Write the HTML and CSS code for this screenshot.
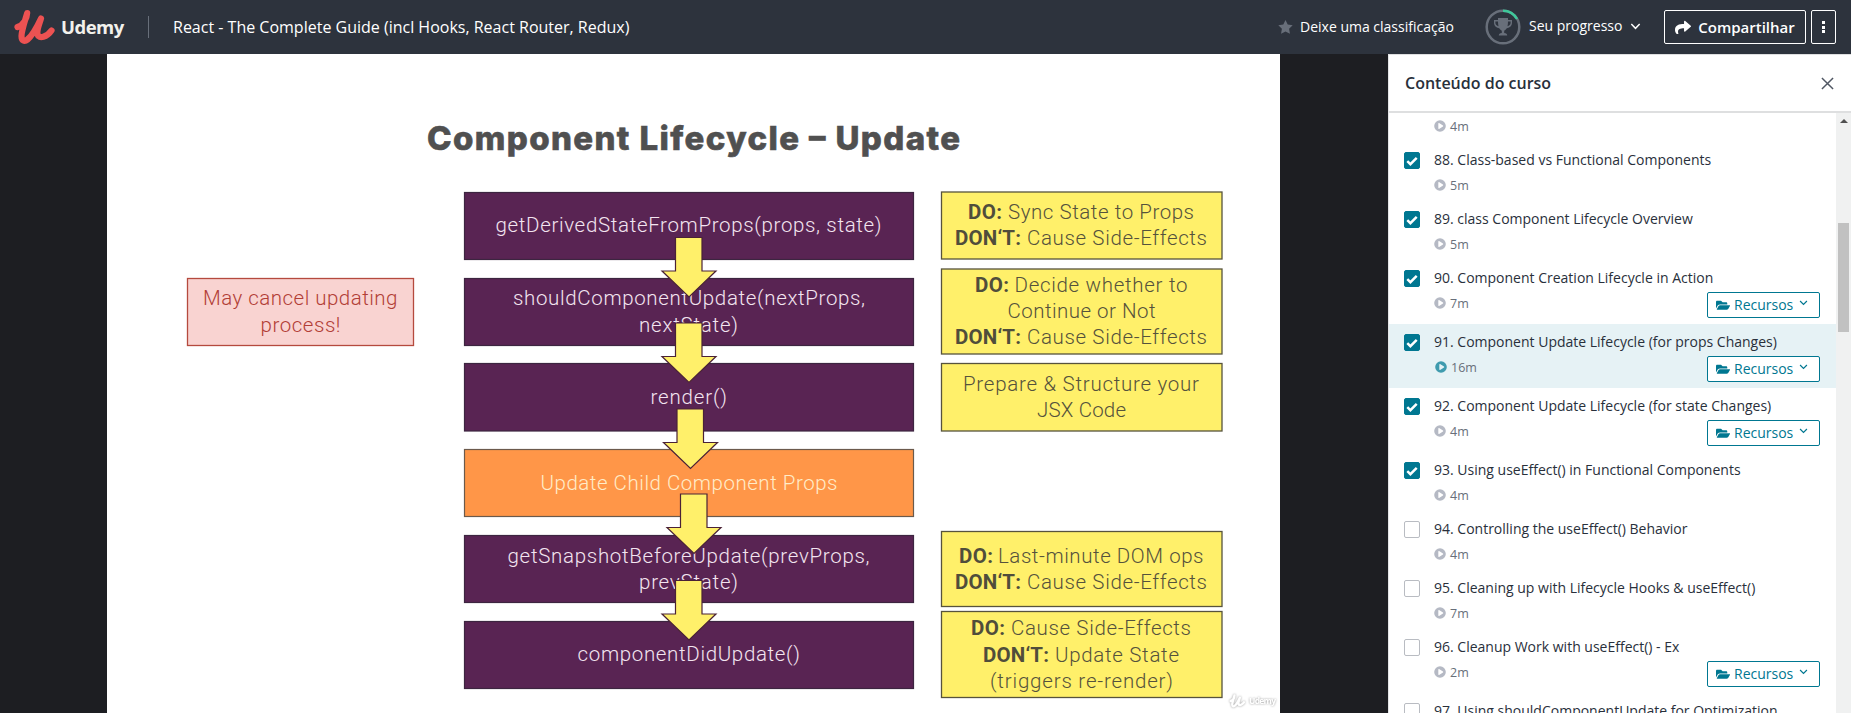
FILE: index.html
```html
<!DOCTYPE html>
<html lang="pt">
<head>
<meta charset="utf-8">
<title>React - The Complete Guide</title>
<link rel="stylesheet" href="styles.css">
</head>
<body>
<svg class="defs" width="0" height="0" aria-hidden="true">
  <symbol id="brand" viewBox="0 0 42 36"><path d="M3.500 18C9.500 16 13 9.500 13.200 4C11.500 10 7.500 22 7.500 27C7.500 32 10.500 33 13.500 30.500C18.500 26.500 23.500 17 27 9.500C25.500 15 22.500 21 23.500 25.500C25 30.500 33 28 37.500 21.500" fill="none" stroke="currentColor" stroke-width="6.200" stroke-linecap="round" stroke-linejoin="round"/></symbol>
  <symbol id="play" viewBox="0 0 512 512"><path fill="currentColor" fill-rule="evenodd" d="M256 8a248 248 0 1 0 0 496 248 248 0 0 0 0-496zM184 150v212c0 18 18 26 32 18l168-102c14-10 14-34 0-44L216 132c-14-8-32 0-32 18z"/></symbol>
  <symbol id="folder" viewBox="0 0 576 448"><path fill="currentColor" d="M573 260l-72 124c-12 20-40 32-62 32H45c-11 0-20-8-12-22l72-124c12-20 40-32 62-32h394c11 0 20 8 12 22zM167 206h297v-46c0-26-22-48-48-48H272l-64-64H48C22 48 0 70 0 96v272l77-132c18-18 56-30 90-30z"/></symbol>
  <symbol id="down" viewBox="0 0 10 8"><path d="M1.200 1.800L5 5.700L8.800 1.800" fill="none" stroke="currentColor" stroke-width="1.300"/></symbol>
  <symbol id="tick" viewBox="0 0 12 10"><path d="M1.300 5.200L4.400 8.200L10.700 1.900" fill="none" stroke="#fff" stroke-width="2.500"/></symbol>
  <symbol id="arrow" viewBox="-28 0 56 61" overflow="visible"><path d="M-13.500 .5H13V34H27L0 60L-27 34H-13.500Z"/></symbol>
</svg>

<header class="topbar">
  <svg class="brand-mark"><use href="#brand"/></svg>
  <span class="brand-name">Udemy</span>
  <span class="divider"></span>
  <h1 class="course">React - The Complete Guide (incl Hooks, React Router, Redux)</h1>
  <svg class="star" viewBox="0 0 24 23"><path fill="currentColor" d="M12 0l3.600 7.500 8.200 1.200-5.900 5.800 1.400 8.200L12 18.900l-7.300 3.800 1.400-8.200L.2 8.700l8.200-1.200z"/></svg>
  <span class="rate">Deixe uma classificação</span>
  <svg class="progress" viewBox="0 0 36 36">
    <circle cx="18" cy="18" r="16.300" fill="none" stroke="#686f7a" stroke-width="2.500"/>
    <path d="M18 1.700A16.300 16.300 0 0 1 32 10" fill="none" stroke="#3fc79a" stroke-width="2.500"/>
    <path fill="#686f7a" d="M13 9h10v2h4v3c0 3-3 5-5.200 5.300-.8 1.300-1.700 2-2.600 2.400v2.300c2 .2 3 1 3 2.500H13.800c0-1.500 1-2.300 3-2.500v-2.300c-.9-.4-1.800-1.100-2.600-2.400C12 19 9 17 9 14v-3h4zm0 3.500h-2.600V14c0 1.500 1.600 2.700 3.100 3.200-.3-1.300-.5-3-.5-4.700zm10 0c0 1.700-.2 3.400-.5 4.700 1.500-.5 3.100-1.700 3.100-3.200v-1.500z"/>
  </svg>
  <span class="prog-label">Seu progresso</span>
  <svg class="prog-down"><use href="#down"/></svg>
  <button class="btn share"><svg viewBox="0 0 512 448"><path fill="currentColor" d="M504 184L328 32c-15-13-39-2-39 18v80C129 132 0 164 0 316c0 61 39 122 83 154 14 10 33-3 28-19C66 305 132 267 289 265v88c0 20 24 31 39 18l176-152c11-9 11-25 0-35z"/></svg><span>Compartilhar</span></button>
  <button class="btn more"><i></i><i></i><i></i></button>
</header>

<div class="main">
  <div class="player">
    <svg class="slide" viewBox="107 54 1173 659">
      <text class="title" x="427" y="150" textLength="533">Component Lifecycle – Update</text>
      <g class="step">
        <rect x="464.500" y="192.500" width="449" height="67"/>
        <rect x="464.500" y="278.500" width="449" height="67"/>
        <rect x="464.500" y="363.500" width="449" height="67.500"/>
        <rect class="child" x="464.500" y="449.500" width="449" height="67"/>
        <rect x="464.500" y="535.500" width="449" height="67"/>
        <rect x="464.500" y="621.500" width="449" height="67"/>
      </g>
      <g class="t light">
        <text x="495.500" y="232" textLength="386">getDerivedStateFromProps(props, state)</text>
        <text x="513" y="305" textLength="352">shouldComponentUpdate(nextProps,</text>
        <text x="639" y="331.500" textLength="99">nextState)</text>
        <text x="650.500" y="404" textLength="76.500">render()</text>
        <text class="cream" x="540.500" y="489.500" textLength="297">Update Child Component Props</text>
        <text x="507.500" y="563" textLength="362">getSnapshotBeforeUpdate(prevProps,</text>
        <text x="639" y="589" textLength="99">prevState)</text>
        <text x="577.500" y="661" textLength="222.500">componentDidUpdate()</text>
      </g>
      <g class="arrows">
        <use href="#arrow" x="661" y="237" width="56" height="61"/>
        <use href="#arrow" x="661" y="322.500" width="56" height="61"/>
        <use href="#arrow" x="662.500" y="408.500" width="56" height="61"/>
        <use href="#arrow" x="666" y="493.500" width="56" height="61"/>
        <use href="#arrow" x="661" y="580" width="56" height="61"/>
      </g>
      <g class="note">
        <rect x="941.500" y="192" width="280.500" height="67"/>
        <rect x="941.500" y="269" width="280.500" height="85"/>
        <rect x="941.500" y="363.500" width="280.500" height="67.500"/>
        <rect x="941.500" y="531.500" width="280.500" height="75"/>
        <rect x="941.500" y="611.500" width="280.500" height="86"/>
      </g>
      <g class="t dark">
        <text class="b" x="968" y="218.500" textLength="34">DO:</text><text x="1008" y="218.500" textLength="186">Sync State to Props</text>
        <text class="b" x="955" y="245" textLength="66">DON‘T:</text><text x="1027" y="245" textLength="180">Cause Side-Effects</text>
        <text class="b" x="975" y="291.500" textLength="34">DO:</text><text x="1014.500" y="291.500" textLength="173">Decide whether to</text>
        <text x="1007.500" y="318" textLength="148">Continue or Not</text>
        <text class="b" x="955" y="344" textLength="66">DON‘T:</text><text x="1027" y="344" textLength="180">Cause Side-Effects</text>
        <text x="963" y="390.500" textLength="236">Prepare &amp; Structure your</text>
        <text x="1037" y="417" textLength="89">JSX Code</text>
        <text class="b" x="959" y="562.500" textLength="34">DO:</text><text x="998" y="562.500" textLength="205.500">Last-minute DOM ops</text>
        <text class="b" x="955" y="589" textLength="66">DON‘T:</text><text x="1027" y="589" textLength="180">Cause Side-Effects</text>
        <text class="b" x="971" y="634.500" textLength="34">DO:</text><text x="1011" y="634.500" textLength="180">Cause Side-Effects</text>
        <text class="b" x="983" y="661.500" textLength="66">DON‘T:</text><text x="1055" y="661.500" textLength="124">Update State</text>
        <text x="990" y="687.500" textLength="183">(triggers re-render)</text>
      </g>
      <rect class="warn" x="187.500" y="278.500" width="226" height="67"/>
      <g class="t red">
        <text x="203" y="305" textLength="194.500">May cancel updating</text>
        <text x="260.500" y="332" textLength="80">process!</text>
      </g>
      <g class="watermark">
        <use href="#brand" x="1229" y="694" width="17" height="14"/>
        <text x="1249" y="704" textLength="27">Udemy</text>
      </g>
    </svg>
  </div>

  <aside class="sidebar">
    <div class="side-head"><h2>Conteúdo do curso</h2>
      <svg class="close" viewBox="0 0 14 14"><path d="M1 1L13 13M13 1L1 13" stroke="#505763" stroke-width="1.600"/></svg></div>
    <div class="side-body">
      <ul class="lectures">
        <li class="lecture partial"><div class="info"><small><svg><use href="#play"/></svg>4m</small></div></li>
        <li class="lecture"><span class="check on"><svg><use href="#tick"/></svg></span><div class="info"><p>88. Class-based vs Functional Components</p><small><svg><use href="#play"/></svg>5m</small></div></li>
        <li class="lecture"><span class="check on"><svg><use href="#tick"/></svg></span><div class="info"><p>89. class Component Lifecycle Overview</p><small><svg><use href="#play"/></svg>5m</small></div></li>
        <li class="lecture res"><span class="check on"><svg><use href="#tick"/></svg></span><div class="info"><p>90. Component Creation Lifecycle in Action</p><div class="meta"><small><svg><use href="#play"/></svg>7m</small><button class="files"><svg class="folder"><use href="#folder"/></svg>Recursos<svg class="down"><use href="#down"/></svg></button></div></div></li>
        <li class="lecture res current"><span class="check on"><svg><use href="#tick"/></svg></span><div class="info"><p>91. Component Update Lifecycle (for props Changes)</p><div class="meta"><small><svg><use href="#play"/></svg>16m</small><button class="files"><svg class="folder"><use href="#folder"/></svg>Recursos<svg class="down"><use href="#down"/></svg></button></div></div></li>
        <li class="lecture res"><span class="check on"><svg><use href="#tick"/></svg></span><div class="info"><p>92. Component Update Lifecycle (for state Changes)</p><div class="meta"><small><svg><use href="#play"/></svg>4m</small><button class="files"><svg class="folder"><use href="#folder"/></svg>Recursos<svg class="down"><use href="#down"/></svg></button></div></div></li>
        <li class="lecture"><span class="check on"><svg><use href="#tick"/></svg></span><div class="info"><p>93. Using useEffect() in Functional Components</p><small><svg><use href="#play"/></svg>4m</small></div></li>
        <li class="lecture"><span class="check"></span><div class="info"><p>94. Controlling the useEffect() Behavior</p><small><svg><use href="#play"/></svg>4m</small></div></li>
        <li class="lecture"><span class="check"></span><div class="info"><p>95. Cleaning up with Lifecycle Hooks &amp; useEffect()</p><small><svg><use href="#play"/></svg>7m</small></div></li>
        <li class="lecture res"><span class="check"></span><div class="info"><p>96. Cleanup Work with useEffect() - Ex</p><div class="meta"><small><svg><use href="#play"/></svg>2m</small><button class="files"><svg class="folder"><use href="#folder"/></svg>Recursos<svg class="down"><use href="#down"/></svg></button></div></div></li>
        <li class="lecture"><span class="check"></span><div class="info"><p>97. Using shouldComponentUpdate for Optimization</p></div></li>
      </ul>
      <div class="scrollbar"><span class="up"></span><span class="thumb"></span></div>
    </div>
  </aside>
</div>
</body>
</html>
```

FILE: styles.css
```css
* { box-sizing: border-box; }
body { margin: 0; height: 713px; overflow: hidden; display: flex; flex-direction: column; font-family: "Open Sans", "Noto Sans", sans-serif; color: #29303b; }
h1, h2, p, ul { margin: 0; padding: 0; font-weight: 400; }
button { font: inherit; margin: 0; padding: 0; background: none; }
svg { display: block; flex: none; }
.defs { position: absolute; }

.topbar { height: 54px; flex: none; display: flex; align-items: center; background: #2d333d; color: #fff; padding: 0 15px 0 14px; white-space: nowrap; }
.brand-mark { width: 42px; height: 36px; color: #ec5252; }
.brand-name { width: 63px; margin-left: 5px; padding-bottom: 2px; font-size: 18.500px; font-weight: 700; letter-spacing: -.5px; color: #f2f1ec; }
.divider { width: 1px; height: 22px; margin-left: 24px; background: #686f7a; }
.course { width: 460px; margin-left: 24px; font-size: 16px; line-height: 20px; }
.star { width: 15px; height: 14px; margin: 0 0 1px auto; color: #686f7a; }
.rate { width: 154px; margin-left: 7px; padding-bottom: 1px; font-size: 14px; }
.progress { width: 36px; height: 36px; margin-left: 31px; }
.prog-label { width: 94px; margin-left: 8px; padding-bottom: 3px; font-size: 14px; }
.prog-down { width: 11px; height: 9px; margin: 0 1px 2px 7px; }
.btn { height: 34px; border: 1px solid #fff; border-radius: 2px; color: #fff; display: flex; align-items: center; justify-content: center; }
.share { width: 142px; margin-left: 22px; gap: 7px; padding-bottom: 1px; font-size: 15px; font-weight: 600; }
.share svg { width: 16px; height: 14px; }
.more { width: 25px; margin-left: 5px; flex-direction: column; gap: 1.500px; }
.more i { width: 3px; height: 3px; background: #fff; }

.main { flex: 1; display: flex; min-height: 0; }
.player { flex: 1; background: #1d1e22; padding-left: 107px; }
.slide { width: 1173px; height: 659px; background: #fff; }
.title { font: 800 33px Inter, sans-serif; fill: #505050; stroke: #505050; stroke-width: .6; }
.step rect { fill: #592453; stroke: #3c2540; stroke-width: 1.200; }
.step .child { fill: #ff9648; stroke: #6b5a4c; }
.note rect { fill: #fff06a; stroke: #57533c; stroke-width: 1.300; }
.warn { fill: #f9d3d1; stroke: #b54a3e; stroke-width: 1.300; }
.arrows { fill: #fff06a; stroke: #4a2236; stroke-width: 1.200; }
.t { font: 300 20.500px Roboto, sans-serif; }
.light { fill: #f3e4f0; }
.cream { fill: #ffecc8; }
.dark { fill: #55523c; }
.red { fill: #b23e36; }
.b { font-weight: 700; fill: #504d3b; }
.watermark { color: #fff; fill: #fff; font: 700 8.500px "Open Sans", sans-serif; filter: drop-shadow(0 0 1px #999); }

.sidebar { width: 463px; flex: none; display: flex; flex-direction: column; background: #fff; border-left: 1px solid #e3e4e6; }
.side-head { height: 59px; flex: none; display: flex; align-items: center; justify-content: space-between; padding: 0 17px 0 16px; border-top: 1px solid #dedfe0; border-bottom: 2px solid #dedfe0; }
.side-head h2 { font-size: 16px; font-weight: 600; }
.close { width: 13px; height: 13px; }
.side-body { flex: 1; display: flex; min-height: 0; overflow: hidden; }
.lectures { flex: 1; list-style: none; }
.lecture { height: 59px; display: flex; padding: 10px 16px 0 15px; }
.partial { height: 29px; padding: 0 0 0 31px; }
.res { height: 64px; }
.current { background: #e6f2f5; }
.check { width: 16px; height: 17px; flex: none; border: 1px solid #b9bcc2; border-radius: 2px; }
.on { background: #007791; border-color: #007791; display: flex; align-items: center; justify-content: center; }
.on svg { width: 12px; height: 10px; }
.info { flex: 1; margin-left: 14px; }
.info p { font-size: 14px; line-height: 20px; margin-top: -2px; white-space: nowrap; }
.info small { display: flex; align-items: center; height: 18px; margin-top: 6px; font-size: 12.500px; color: #686f7a; gap: 4px; }
.info small svg { width: 12px; height: 12px; margin-bottom: 1px; color: #b5b9c4; }
.partial small { margin-top: 4px; }
.current small svg { color: #3f9bae; margin-left: 1px; }
.meta { display: flex; justify-content: space-between; }
.files { width: 113px; height: 26px; margin-top: 4px; border: 1px solid #007791; border-radius: 2px; background: #fff; color: #007791; display: flex; align-items: center; padding: 0 0 1px 8px; font-size: 14px; }
.folder { width: 14px; height: 12px; margin-right: 4px; }
.down { width: 9px; height: 8px; margin: 0 0 3px 6px; }
.scrollbar { width: 15px; background: #f0f1f1; display: flex; flex-direction: column; align-items: center; }
.up { margin-top: 6px; border: 4px solid transparent; border-top: 0; border-bottom-color: #505050; }
.thumb { width: 11px; height: 109px; margin-top: 100px; background: #c1c1c1; }
```
